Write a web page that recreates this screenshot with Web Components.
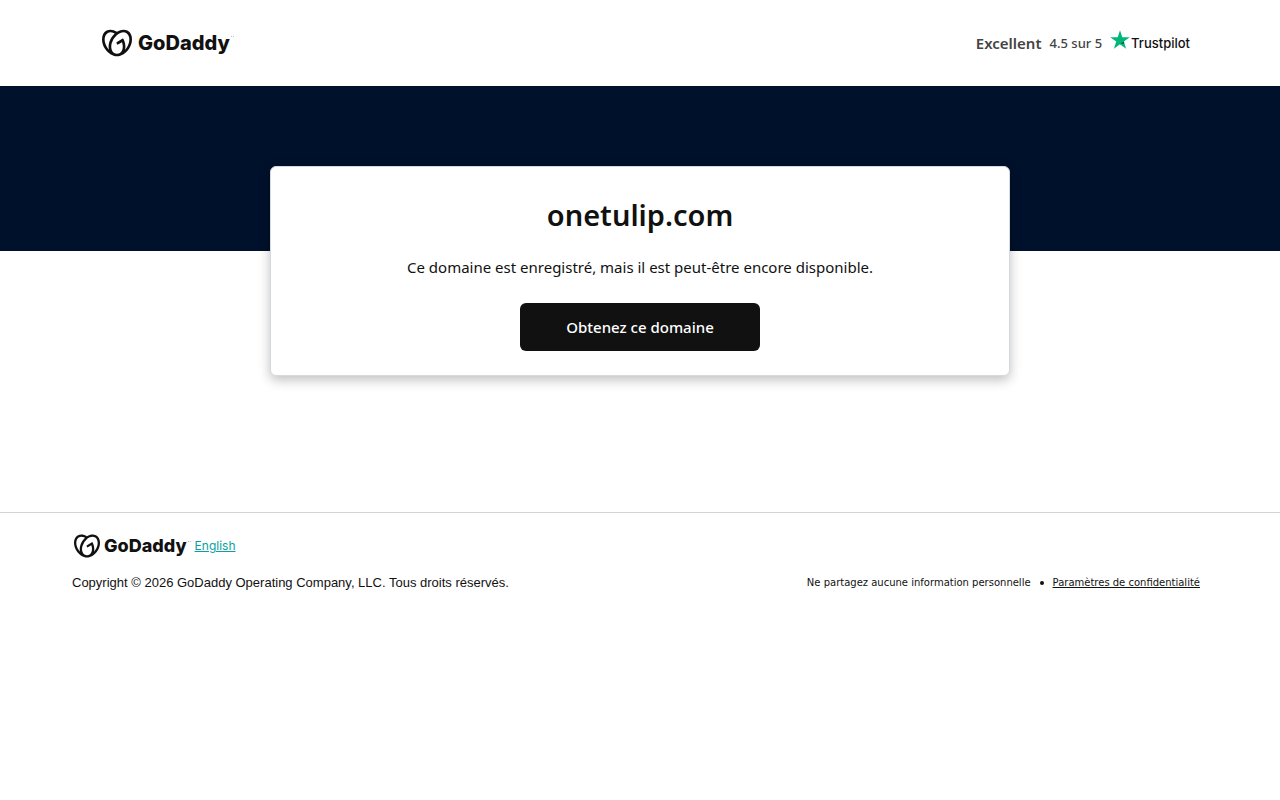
<!DOCTYPE html>
<html lang="fr">
<head>
<meta charset="utf-8">
<title>onetulip.com</title>
<meta name="viewport" content="width=device-width, initial-scale=1">
<style>
body { margin: 0; background: #fff; color: #111; font: 15px/24px "Noto Sans", "Open Sans", sans-serif; }
</style>
</head>
<body>
<domain-page></domain-page>
<script>
function define(name, html) {
  const template = document.createElement('template');
  template.innerHTML = html;
  customElements.define(name, class extends HTMLElement {
    constructor() {
      super();
      this.attachShadow({ mode: 'open' }).append(template.content.cloneNode(true));
    }
  });
}

define('brand-logo', `
<style>
  :host { display: inline-flex; align-items: center; gap: 6px; color: #111;
    --mark: 30px; font: 800 20px/28px Inter, sans-serif; }
  :host([small]) { --mark: 26px; gap: 4px; font-size: 18px; line-height: 24px; }
  svg { width: var(--mark); height: var(--mark); flex: none; }
  .name { display: flex; }
  .name svg { width: 4px; height: 4px; margin-top: 6px; }
</style>
<svg viewBox="0 0 24 24" fill="currentColor" aria-hidden="true"><path d="M20.702 2.29c-2.494-1.554-5.778-1.187-8.706.654C9.076 1.104 5.79.736 3.3 2.29c-3.941 2.463-4.42 8.806-1.07 14.167 2.47 3.954 6.333 6.269 9.77 6.226 3.439.043 7.301-2.273 9.771-6.226 3.347-5.361 2.872-11.704-1.069-14.167zM4.042 15.328a12.838 12.838 0 01-1.546-3.541 10.12 10.12 0 01-.336-3.338c.15-1.98.956-3.524 2.27-4.345 1.315-.822 3.052-.87 4.903-.137.281.113.556.24.825.382A15.11 15.11 0 007.5 7.54c-2.035 3.255-2.655 6.878-1.945 9.765a13.247 13.247 0 01-1.514-1.98zm17.465-3.541a12.866 12.866 0 01-1.547 3.54 13.25 13.25 0 01-1.513 1.984c.635-2.589.203-5.76-1.353-8.734a.39.39 0 00-.563-.153l-4.852 3.032a.397.397 0 00-.126.546l.712 1.139a.395.395 0 00.547.126l3.145-1.965c.101.306.203.606.28.916.296 1.086.41 2.214.335 3.337-.15 1.982-.956 3.525-2.27 4.347a4.437 4.437 0 01-2.25.65h-.101a4.432 4.432 0 01-2.25-.65c-1.314-.822-2.121-2.365-2.27-4.347-.074-1.123.039-2.251.335-3.337a13.212 13.212 0 014.05-6.482 10.148 10.148 0 012.849-1.765c1.845-.733 3.586-.685 4.9.137 1.316.822 2.122 2.365 2.271 4.345a10.146 10.146 0 01-.33 3.334z"/></svg>
<span class="name">GoDaddy<svg viewBox="0 0 4 4" fill="#bbb" aria-hidden="true"><path d="M1 1h1v1H1zM3 1h1v1H3z"/></svg></span>`);

define('trust-rating', `
<style>
  :host { display: flex; align-items: center; gap: 8px; color: #444; }
  strong { font-size: 15px; font-weight: 600; }
  .score { font-size: 13px; font-weight: 500; }
  .pilot { display: flex; align-items: center; gap: 1px; color: #111; font: 500 13px/24px Inter, sans-serif; }
  svg { width: 20px; height: 20px; margin-bottom: 6px; }
</style>
<strong>Excellent</strong>
<span class="score">4.5 sur 5</span>
<span class="pilot"><svg viewBox="0 0 20 20" aria-hidden="true"><path fill="#00b67a" d="M10 .2l2.300 7.100h7.500l-6 4.300 2.300 7.100L10 14.300l-6.100 4.400 2.300-7.100-6-4.300h7.500z"/><path fill="#005128" d="M14.300 13.200l-.5-1.600L10 14.300z"/></svg>Trustpilot</span>`);

define('site-header', `
<style>
  :host { display: flex; align-items: center; justify-content: space-between; height: 86px;
    padding: 0 90px 0 102px; box-sizing: border-box; }
</style>
<slot></slot>`);

define('domain-card', `
<style>
  :host { display: block; box-sizing: border-box; width: 100%; max-width: 740px; padding: 28px 24px 24px;
    background: #fff; border: 1px solid #d4dbe0; border-radius: 6px; text-align: center;
    box-shadow: 0 4px 12px rgba(0, 0, 0, .25); }
  h1 { margin: 0; font-size: 29px; line-height: 40px; font-weight: 600; }
  p { margin: 20px 0 24px; }
  button { width: 240px; height: 48px; padding: 0; border: 0; border-radius: 6px; background: #111;
    color: #fff; font: inherit; font-weight: 500; cursor: pointer; display: block; margin: 0 auto; }
</style>
<h1><slot></slot></h1>
<p>Ce domaine est enregistré, mais il est peut-être encore disponible.</p>
<button type="button">Obtenez ce domaine</button>`);

define('domain-hero', `
<style>
  :host { display: flex; justify-content: center; padding: 80px 24px 136px;
    background: linear-gradient(#00112b 165px, #fff 165px); }
</style>
<slot></slot>`);

define('site-footer', `
<style>
  :host { display: block; border-top: 1px solid #d4d4d4; padding: 20px 80px 20px 72px; }
  .brand { display: flex; align-items: center; gap: 4px; padding-left: 2px; font: 12px/24px Inter, sans-serif; }
  .brand a { color: #09a1a1; }
  .legal { display: flex; justify-content: space-between; align-items: center; margin-top: 12px;
    font: 13px/24px "Liberation Sans", Arial, sans-serif; }
  .privacy { display: flex; align-items: center; gap: 9px; font-family: "DejaVu Sans", sans-serif; font-size: 10px; }
  .dot { width: 4px; height: 4px; border-radius: 50%; background: #111; }
  .privacy a { color: inherit; }
</style>
<div class="brand"><brand-logo small></brand-logo><a href="#en" lang="en">English</a></div>
<div class="legal">
  <span>Copyright © 2026 GoDaddy Operating Company, LLC. Tous droits réservés.</span>
  <span class="privacy"><span>Ne partagez aucune information personnelle</span><span class="dot"></span><a href="#privacy">Paramètres de confidentialité</a></span>
</div>`);

define('domain-page', `
<style>:host { display: block; }</style>
<site-header><brand-logo></brand-logo><trust-rating></trust-rating></site-header>
<main><domain-hero><domain-card>onetulip.com</domain-card></domain-hero></main>
<site-footer></site-footer>`);
</script>
</body>
</html>
